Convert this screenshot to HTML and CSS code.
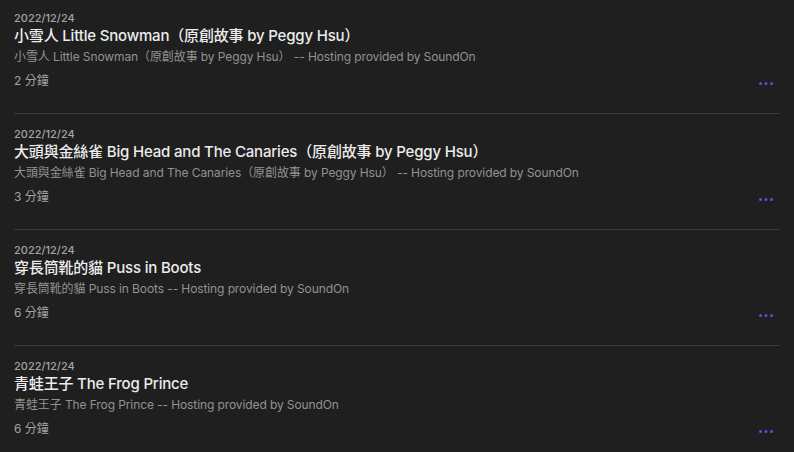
FILE: index.html
```html
<!DOCTYPE html>
<html lang="zh-Hant">
<head>
<meta charset="utf-8">
<link rel="stylesheet" href="styles.css">
</head>
<body>
<ul class="episodes">
  <li class="episode">
    <div class="date">2022/12/24</div>
    <div class="title">小雪人 Little Snowman（原創故事 by Peggy Hsu）</div>
    <div class="desc">小雪人 Little Snowman（原創故事 by Peggy Hsu） -- Hosting provided by SoundOn</div>
    <div class="meta">
      <span class="duration">2 分鐘</span>
      <span class="more"><svg width="14" height="3" viewBox="0 0 14 3"><circle cx="1.5" cy="1.5" r="1.5"/><circle cx="7" cy="1.5" r="1.5"/><circle cx="12.5" cy="1.5" r="1.5"/></svg></span>
    </div>
  </li>
  <li class="episode">
    <div class="date">2022/12/24</div>
    <div class="title">大頭與金絲雀 Big Head and The Canaries（原創故事 by Peggy Hsu）</div>
    <div class="desc">大頭與金絲雀 Big Head and The Canaries（原創故事 by Peggy Hsu） -- Hosting provided by SoundOn</div>
    <div class="meta">
      <span class="duration">3 分鐘</span>
      <span class="more"><svg width="14" height="3" viewBox="0 0 14 3"><circle cx="1.5" cy="1.5" r="1.5"/><circle cx="7" cy="1.5" r="1.5"/><circle cx="12.5" cy="1.5" r="1.5"/></svg></span>
    </div>
  </li>
  <li class="episode">
    <div class="date">2022/12/24</div>
    <div class="title">穿長筒靴的貓 Puss in Boots</div>
    <div class="desc">穿長筒靴的貓 Puss in Boots -- Hosting provided by SoundOn</div>
    <div class="meta">
      <span class="duration">6 分鐘</span>
      <span class="more"><svg width="14" height="3" viewBox="0 0 14 3"><circle cx="1.5" cy="1.5" r="1.5"/><circle cx="7" cy="1.5" r="1.5"/><circle cx="12.5" cy="1.5" r="1.5"/></svg></span>
    </div>
  </li>
  <li class="episode">
    <div class="date">2022/12/24</div>
    <div class="title">青蛙王子 The Frog Prince</div>
    <div class="desc">青蛙王子 The Frog Prince -- Hosting provided by SoundOn</div>
    <div class="meta">
      <span class="duration">6 分鐘</span>
      <span class="more"><svg width="14" height="3" viewBox="0 0 14 3"><circle cx="1.5" cy="1.5" r="1.5"/><circle cx="7" cy="1.5" r="1.5"/><circle cx="12.5" cy="1.5" r="1.5"/></svg></span>
    </div>
  </li>
</ul>
</body>
</html>
```
FILE: styles.css
```css
html, body {
  margin: 0;
  padding: 0;
  background: #1f1f1f;
  height: 100%;
  overflow: hidden;
}
body {
  font-family: Inter, "Noto Sans CJK TC", sans-serif;
  color: #e6e6e6;
}
.episodes {
  list-style: none;
  margin: 0;
  padding: 0 14px;
}
.episode {
  padding: 11px 0 24px;
  border-bottom: 1px solid #3a3a3a;
  margin-bottom: 2px;
}
.date {
  font-size: 11px;
  line-height: 14px;
  font-weight: 500;
  color: #a3a3a3;
}
.title {
  margin-top: 1px;
  font-size: 15px;
  line-height: 20px;
  font-weight: 500;
  letter-spacing: -0.18px;
  color: #ececec;
}
.desc {
  margin-top: 3px;
  font-size: 12px;
  line-height: 16px;
  letter-spacing: -0.1px;
  color: #929292;
  white-space: pre-wrap;
}
.meta {
  margin-top: 8px;
  display: flex;
  justify-content: space-between;
  align-items: flex-start;
}
.duration {
  font-size: 12px;
  line-height: 16px;
  color: #a3a3a3;
}
.more {
  display: flex;
  padding-top: 9px;
  margin-right: 7px;
}
.more svg {
  fill: #7c3fd6;
}
```
